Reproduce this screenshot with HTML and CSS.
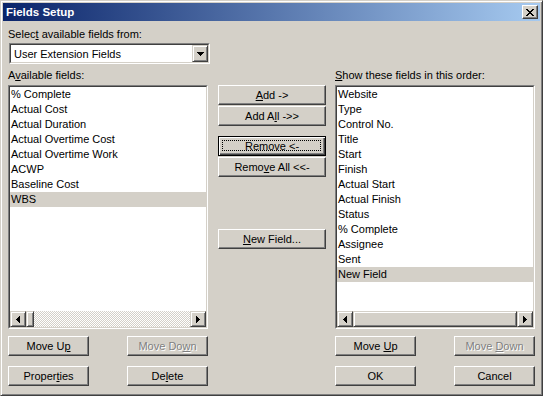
FILE: index.html
```html
<!DOCTYPE html>
<html lang="en">
<head>
<meta charset="UTF-8" />
<title>Fields Setup</title>
<link rel="stylesheet" href="styles.css">
</head>
<body>

<div class="window">
  <div class="titlebar">
    <span class="title">Fields Setup</span>
    <span class="close">
      <svg width="8" height="7" viewBox="0 0 8 7" shape-rendering="crispEdges"><path fill="#000" d="M0 0h2v1h-2z M6 0h2v1h-2z M1 1h2v1h-2z M5 1h2v1h-2z M2 2h4v1h-4z M3 3h2v1h-2z M2 4h4v1h-4z M1 5h2v1h-2z M5 5h2v1h-2z M0 6h2v1h-2z M6 6h2v1h-2z"/></svg>
    </span>
  </div>

  <div class="client">
    <div class="lbl">Selec<u>t</u> available fields from:</div>
    <div class="combo">
      <div class="combo-inner">
        <span class="combo-text">User Extension Fields</span>
        <span class="raised drop">
          <svg width="7" height="4" viewBox="0 0 7 4" shape-rendering="crispEdges"><path fill="#000" d="M0 0h7v1h-1v1h-1v1h-1v1h-1v-1h-1v-1h-1v-1h-1z"/></svg>
        </span>
      </div>
    </div>

    <div class="columns">
      <!-- available fields -->
      <div class="col">
        <div class="lbl">A<u>v</u>ailable fields:</div>
        <div class="list">
          <div class="list-inner">
            <div class="items">
              <div class="item">% Complete</div>
              <div class="item">Actual Cost</div>
              <div class="item">Actual Duration</div>
              <div class="item">Actual Overtime Cost</div>
              <div class="item">Actual Overtime Work</div>
              <div class="item">ACWP</div>
              <div class="item">Baseline Cost</div>
              <div class="item selected">WBS</div>
            </div>
            <div class="hscroll">
              <span class="raised arrow"><svg width="4" height="7" viewBox="0 0 4 7" shape-rendering="crispEdges"><path fill="#000" d="M3 0h1v7h-1v-1h-1v-1h-1v-1h-1v-1h1v-1h1v-1h1z"/></svg></span>
              <span class="raised thumb small"></span>
              <span class="track"></span>
              <span class="raised arrow"><svg width="4" height="7" viewBox="0 0 4 7" shape-rendering="crispEdges"><path fill="#000" d="M0 0h1v1h1v1h1v1h1v1h-1v1h-1v1h-1v1h-1z"/></svg></span>
            </div>
          </div>
        </div>
        <div class="btn-row">
          <button class="btn"><span>Move U<u>p</u></span></button>
          <button class="btn disabled"><span>Move Do<u>w</u>n</span></button>
        </div>
        <div class="btn-row">
          <button class="btn"><span>Proper<u>t</u>ies</span></button>
          <button class="btn"><span>De<u>l</u>ete</span></button>
        </div>
      </div>

      <!-- middle buttons -->
      <div class="mid">
        <button class="btn"><span><u>A</u>dd -&gt;</span></button>
        <button class="btn next"><span>Add A<u>l</u>l -&gt;&gt;</span></button>
        <button class="btn default group"><span>Remove &lt;-</span></button>
        <button class="btn next"><span>Remo<u>v</u>e All &lt;&lt;-</span></button>
        <button class="btn newfield"><span><u>N</u>ew Field...</span></button>
      </div>

      <!-- selected fields -->
      <div class="col">
        <div class="lbl"><u>S</u>how these fields in this order:</div>
        <div class="list">
          <div class="list-inner">
            <div class="items">
              <div class="item">Website</div>
              <div class="item">Type</div>
              <div class="item">Control No.</div>
              <div class="item">Title</div>
              <div class="item">Start</div>
              <div class="item">Finish</div>
              <div class="item">Actual Start</div>
              <div class="item">Actual Finish</div>
              <div class="item">Status</div>
              <div class="item">% Complete</div>
              <div class="item">Assignee</div>
              <div class="item">Sent</div>
              <div class="item selected">New Field</div>
            </div>
            <div class="hscroll">
              <span class="raised arrow"><svg width="4" height="7" viewBox="0 0 4 7" shape-rendering="crispEdges"><path fill="#000" d="M3 0h1v7h-1v-1h-1v-1h-1v-1h-1v-1h1v-1h1v-1h1z"/></svg></span>
              <span class="raised thumb wide"></span>
              <span class="raised arrow"><svg width="4" height="7" viewBox="0 0 4 7" shape-rendering="crispEdges"><path fill="#000" d="M0 0h1v1h1v1h1v1h1v1h-1v1h-1v1h-1v1h-1z"/></svg></span>
            </div>
          </div>
        </div>
        <div class="btn-row">
          <button class="btn"><span>Move <u>U</u>p</span></button>
          <button class="btn disabled"><span>Move <u>D</u>own</span></button>
        </div>
        <div class="btn-row">
          <button class="btn"><span>OK</span></button>
          <button class="btn"><span>Cancel</span></button>
        </div>
      </div>
    </div>
  </div>
</div>

</body>
</html>
```

FILE: styles.css
```css
body {
  margin: 0;
  padding: 0;
  background: #d4d0c8;
  font-family: "Liberation Sans", Arial, sans-serif;
  font-size: 11px;
  color: #000;
}
u {
  text-decoration: underline;
  text-underline-offset: 1px;
}

/* Window frame */
.window {
  width: 543px;
  height: 396px;
  box-sizing: border-box;
  border: 1px solid;
  border-color: #d4d0c8 #404040 #404040 #d4d0c8;
  box-shadow: inset 1px 1px #fff, inset -1px -1px #808080;
  padding: 2px;
  background: #d4d0c8;
}
.titlebar {
  height: 18px;
  display: flex;
  align-items: center;
  justify-content: space-between;
  padding: 0 2px 0 3px;
  background: linear-gradient(to right, #0a246a, #a6caf0);
}
.title {
  color: #fff;
  font-weight: bold;
  font-size: 11.5px;
}
.close {
  width: 16px;
  height: 14px;
  box-sizing: border-box;
  display: flex;
  align-items: center;
  justify-content: center;
  padding-right: 1px;
  background: #d4d0c8;
  border: 1px solid;
  border-color: #fff #404040 #404040 #fff;
  box-shadow: inset -1px -1px #808080;
}
.close svg {
  display: block;
}

/* Client area */
.client {
  padding: 7px 5px 0;
}
.lbl {
  height: 13px;
  line-height: 13px;
  white-space: nowrap;
}
.combo {
  width: 201px;
  height: 21px;
  box-sizing: border-box;
  margin: 2px 0 0 1px;
  border: 1px solid;
  border-color: #808080 #fff #fff #808080;
}
.combo-inner {
  height: 100%;
  box-sizing: border-box;
  border: 1px solid;
  border-color: #404040 #d4d0c8 #d4d0c8 #404040;
  background: #fff;
  display: flex;
  align-items: center;
}
.combo-text {
  flex: 1;
  padding-left: 3px;
}
.raised {
  box-sizing: border-box;
  background: #d4d0c8;
  border: 1px solid;
  border-color: #d4d0c8 #404040 #404040 #d4d0c8;
  box-shadow: inset 1px 1px #fff, inset -1px -1px #808080;
  display: flex;
  align-items: center;
  justify-content: center;
}
.drop {
  width: 16px;
  height: 17px;
}
.raised svg {
  display: block;
}

/* Columns */
.columns {
  display: flex;
  margin-top: 5px;
}
.col {
  width: 200px;
}
.mid {
  width: 108px;
  margin: 0 9px 0 10px;
  padding-top: 16px;
  display: flex;
  flex-direction: column;
}
.col .lbl {
  margin-bottom: 3px;
}

/* List boxes */
.list {
  height: 244px;
  box-sizing: border-box;
  border: 1px solid;
  border-color: #808080 #fff #fff #808080;
}
.list-inner {
  height: 100%;
  box-sizing: border-box;
  border: 1px solid;
  border-color: #404040 #d4d0c8 #d4d0c8 #404040;
  background: #fff;
  display: flex;
  flex-direction: column;
}
.items {
  flex: 1;
}
.item {
  height: 15px;
  line-height: 15px;
  padding-left: 1px;
  white-space: nowrap;
}
.item.selected {
  background: #d4d0c8;
}
.hscroll {
  height: 16px;
  display: flex;
}
.arrow {
  width: 16px;
  height: 16px;
}
.thumb {
  height: 16px;
}
.thumb.small {
  width: 8px;
}
.thumb.wide {
  flex: 1;
}
.track {
  flex: 1;
  background-image: conic-gradient(#fff 25%, #d4d0c8 0 50%, #fff 0 75%, #d4d0c8 0);
  background-size: 2px 2px;
}

/* Push buttons */
.btn {
  position: relative;
  height: 20px;
  box-sizing: border-box;
  padding: 0;
  margin: 0;
  background: #d4d0c8;
  border: 1px solid;
  border-color: #fff #404040 #404040 #fff;
  box-shadow: inset -1px -1px #808080;
  font-family: "Liberation Sans", Arial, sans-serif;
  font-size: 11px;
  color: #000;
  display: flex;
  align-items: center;
  justify-content: center;
  white-space: nowrap;
}
.btn.disabled {
  color: #808080;
  text-shadow: 1px 1px #fff;
}
.btn.default {
  border-color: #000;
  box-shadow: inset 1px 1px #fff, inset -1px -1px #404040, inset -2px -2px #808080;
}
.btn.default::after {
  content: "";
  position: absolute;
  top: 3px;
  left: 3px;
  right: 4px;
  bottom: 4px;
  border: 1px dotted #000;
}
.btn-row {
  display: flex;
  justify-content: space-between;
  margin-top: 7px;
}
.btn-row + .btn-row {
  margin-top: 10px;
}
.btn-row .btn {
  width: 81px;
}
.mid .next {
  margin-top: 1px;
}
.mid .group {
  margin-top: 10px;
}
.mid .newfield {
  margin-top: 52px;
}
```
